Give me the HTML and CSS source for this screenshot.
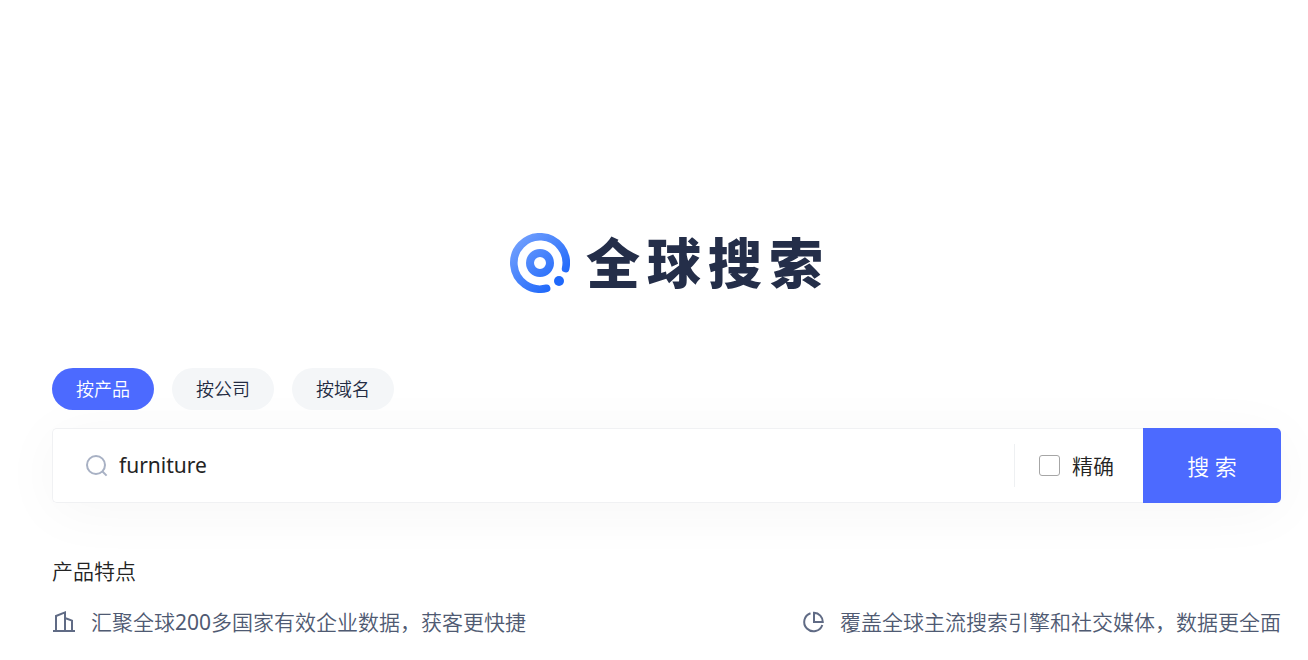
FILE: index.html
```html
<!DOCTYPE html>
<html lang="zh-CN">
<head>
<meta charset="utf-8">
<meta name="viewport" content="width=device-width, initial-scale=1">
<title>全球搜索</title>
<link rel="stylesheet" href="styles.css">
</head>
<body>
<main class="page">
  <h1 class="brand">
    <svg class="brand-mark" viewBox="0 0 60 60" aria-hidden="true">
      <defs>
        <linearGradient id="mark" gradientUnits="userSpaceOnUse" x1="8" y1="8" x2="50" y2="52">
          <stop offset="0" stop-color="#6e9dfd"/>
          <stop offset="1" stop-color="#1c66fa"/>
        </linearGradient>
      </defs>
      <g fill="none" stroke="url(#mark)">
        <path d="M55.6 35.6A26.2 26.2 0 1 0 36.6 55.3" stroke-width="7.6" stroke-linecap="round"/>
        <circle cx="30" cy="30" r="10" stroke-width="8"/>
      </g>
      <circle cx="49" cy="48" r="5" fill="#1f68fb"/>
    </svg>
    <span class="brand-name"><span>全</span><span>球</span><span>搜</span><span>索</span></span>
  </h1>

  <form class="search" onsubmit="return false">
    <div class="tabs">
      <button type="button" class="tab tab-active">按产品</button>
      <button type="button" class="tab">按公司</button>
      <button type="button" class="tab">按域名</button>
    </div>
    <div class="search-bar">
      <div class="search-field">
        <svg class="search-icon" viewBox="0 0 22 22" aria-hidden="true">
          <circle cx="10" cy="10" r="9" /><path d="M16 16l4.600 4.600"/>
        </svg>
        <input class="search-input" type="text" value="furniture" aria-label="搜索">
        <label class="exact"><input class="exact-box" type="checkbox"><span>精确</span></label>
      </div>
      <button type="submit" class="search-button">搜 索</button>
    </div>
  </form>

  <section class="features">
    <h2 class="features-title">产品特点</h2>
    <ul class="feature-list">
      <li class="feature">
        <svg class="feature-icon" viewBox="0 0 24 24" aria-hidden="true">
          <path d="M1 21h22M4 21V6l9-3.600V21M13 8l7 2.600V21"/>
        </svg>
        <span>汇聚全球<span class="figure">200</span>多国家有效企业数据，获客更快捷</span>
      </li>
      <li class="feature">
        <svg class="feature-icon" viewBox="0 0 24 24" aria-hidden="true">
          <path d="M9.500 3.200A9.300 9.300 0 1 0 21.300 15M13 2.800V12H21.800A9 9 0 0 0 13 2.800Z"/>
        </svg>
        <span>覆盖全球主流搜索引擎和社交媒体，数据更全面</span>
      </li>
    </ul>
  </section>
</main>
</body>
</html>
```
FILE: styles.css
```css
* {
  box-sizing: border-box;
}

body {
  margin: 0;
  background: #fff;
  color: #232323;
  font: 350 21px/32px "Noto Sans", "Noto Sans CJK SC", sans-serif;
}

button,
input {
  font: inherit;
  color: inherit;
}

.page {
  padding: 228px 27px 20px 52px;
}

.brand {
  display: flex;
  align-items: center;
  justify-content: center;
  gap: 16px;
  height: 70px;
  margin: 0 0 70px;
  color: #242e49;
  font: 900 54px/70px "Noto Sans CJK SC", sans-serif;
}

.brand-mark {
  width: 60px;
  height: 60px;
}

.brand-name {
  display: flex;
  gap: 7px;
  padding-bottom: 4px;
}

.tabs {
  display: flex;
  gap: 18px;
  margin-bottom: 18px;
}

.tab {
  height: 42px;
  padding: 0 24px;
  border: 0;
  border-radius: 21px;
  background: #f4f6f8;
  color: #232b42;
  font-size: 18px;
}

.tab-active {
  background: #4c6aff;
  color: #fff;
}

.search-bar {
  display: flex;
  height: 75px;
  border-radius: 5px;
  box-shadow: 0 8px 60px rgba(0, 0, 0, 0.04);
}

.search-field {
  display: flex;
  flex: 1;
  align-items: center;
  min-width: 0;
  padding-left: 33px;
  border: 1px solid #f0f1f3;
  border-right: 0;
  border-radius: 5px 0 0 5px;
  background: #fff;
}

.search-icon {
  flex: none;
  width: 22px;
  height: 22px;
  margin-right: 11px;
  fill: none;
  stroke: #a8b1c4;
  stroke-width: 2;
}

.search-input {
  flex: 1;
  min-width: 0;
  padding: 0 0 2px;
  border: 0;
  outline: 0;
  background: none;
  font-weight: 400;
}

.exact {
  display: flex;
  align-items: center;
  gap: 12px;
  height: 43px;
  padding: 0 29px 0 24px;
  border-left: 1px solid #eef0f2;
}

.exact-box {
  appearance: none;
  width: 21px;
  height: 21px;
  margin: 0;
  border: 1px solid #a6a6a6;
  border-radius: 3px;
  background: #fff;
}

.exact-box:checked {
  background: #4c6aff;
}

.search-button {
  width: 138px;
  border: 0;
  border-radius: 0 5px 5px 0;
  background: #4c6aff;
  color: #fff;
  font-size: 22px;
}

.features {
  margin-top: 52px;
}

.features-title {
  margin: 0 0 19px;
  font: inherit;
}

.feature-list {
  display: flex;
  justify-content: space-between;
  margin: 0;
  padding: 0;
  list-style: none;
  color: #4f5a72;
}

.feature {
  display: flex;
  align-items: center;
  gap: 15px;
}

.figure {
  font-weight: 400;
}

.feature-icon {
  flex: none;
  width: 24px;
  height: 24px;
  fill: none;
  stroke: #606b85;
  stroke-width: 2;
}
```
